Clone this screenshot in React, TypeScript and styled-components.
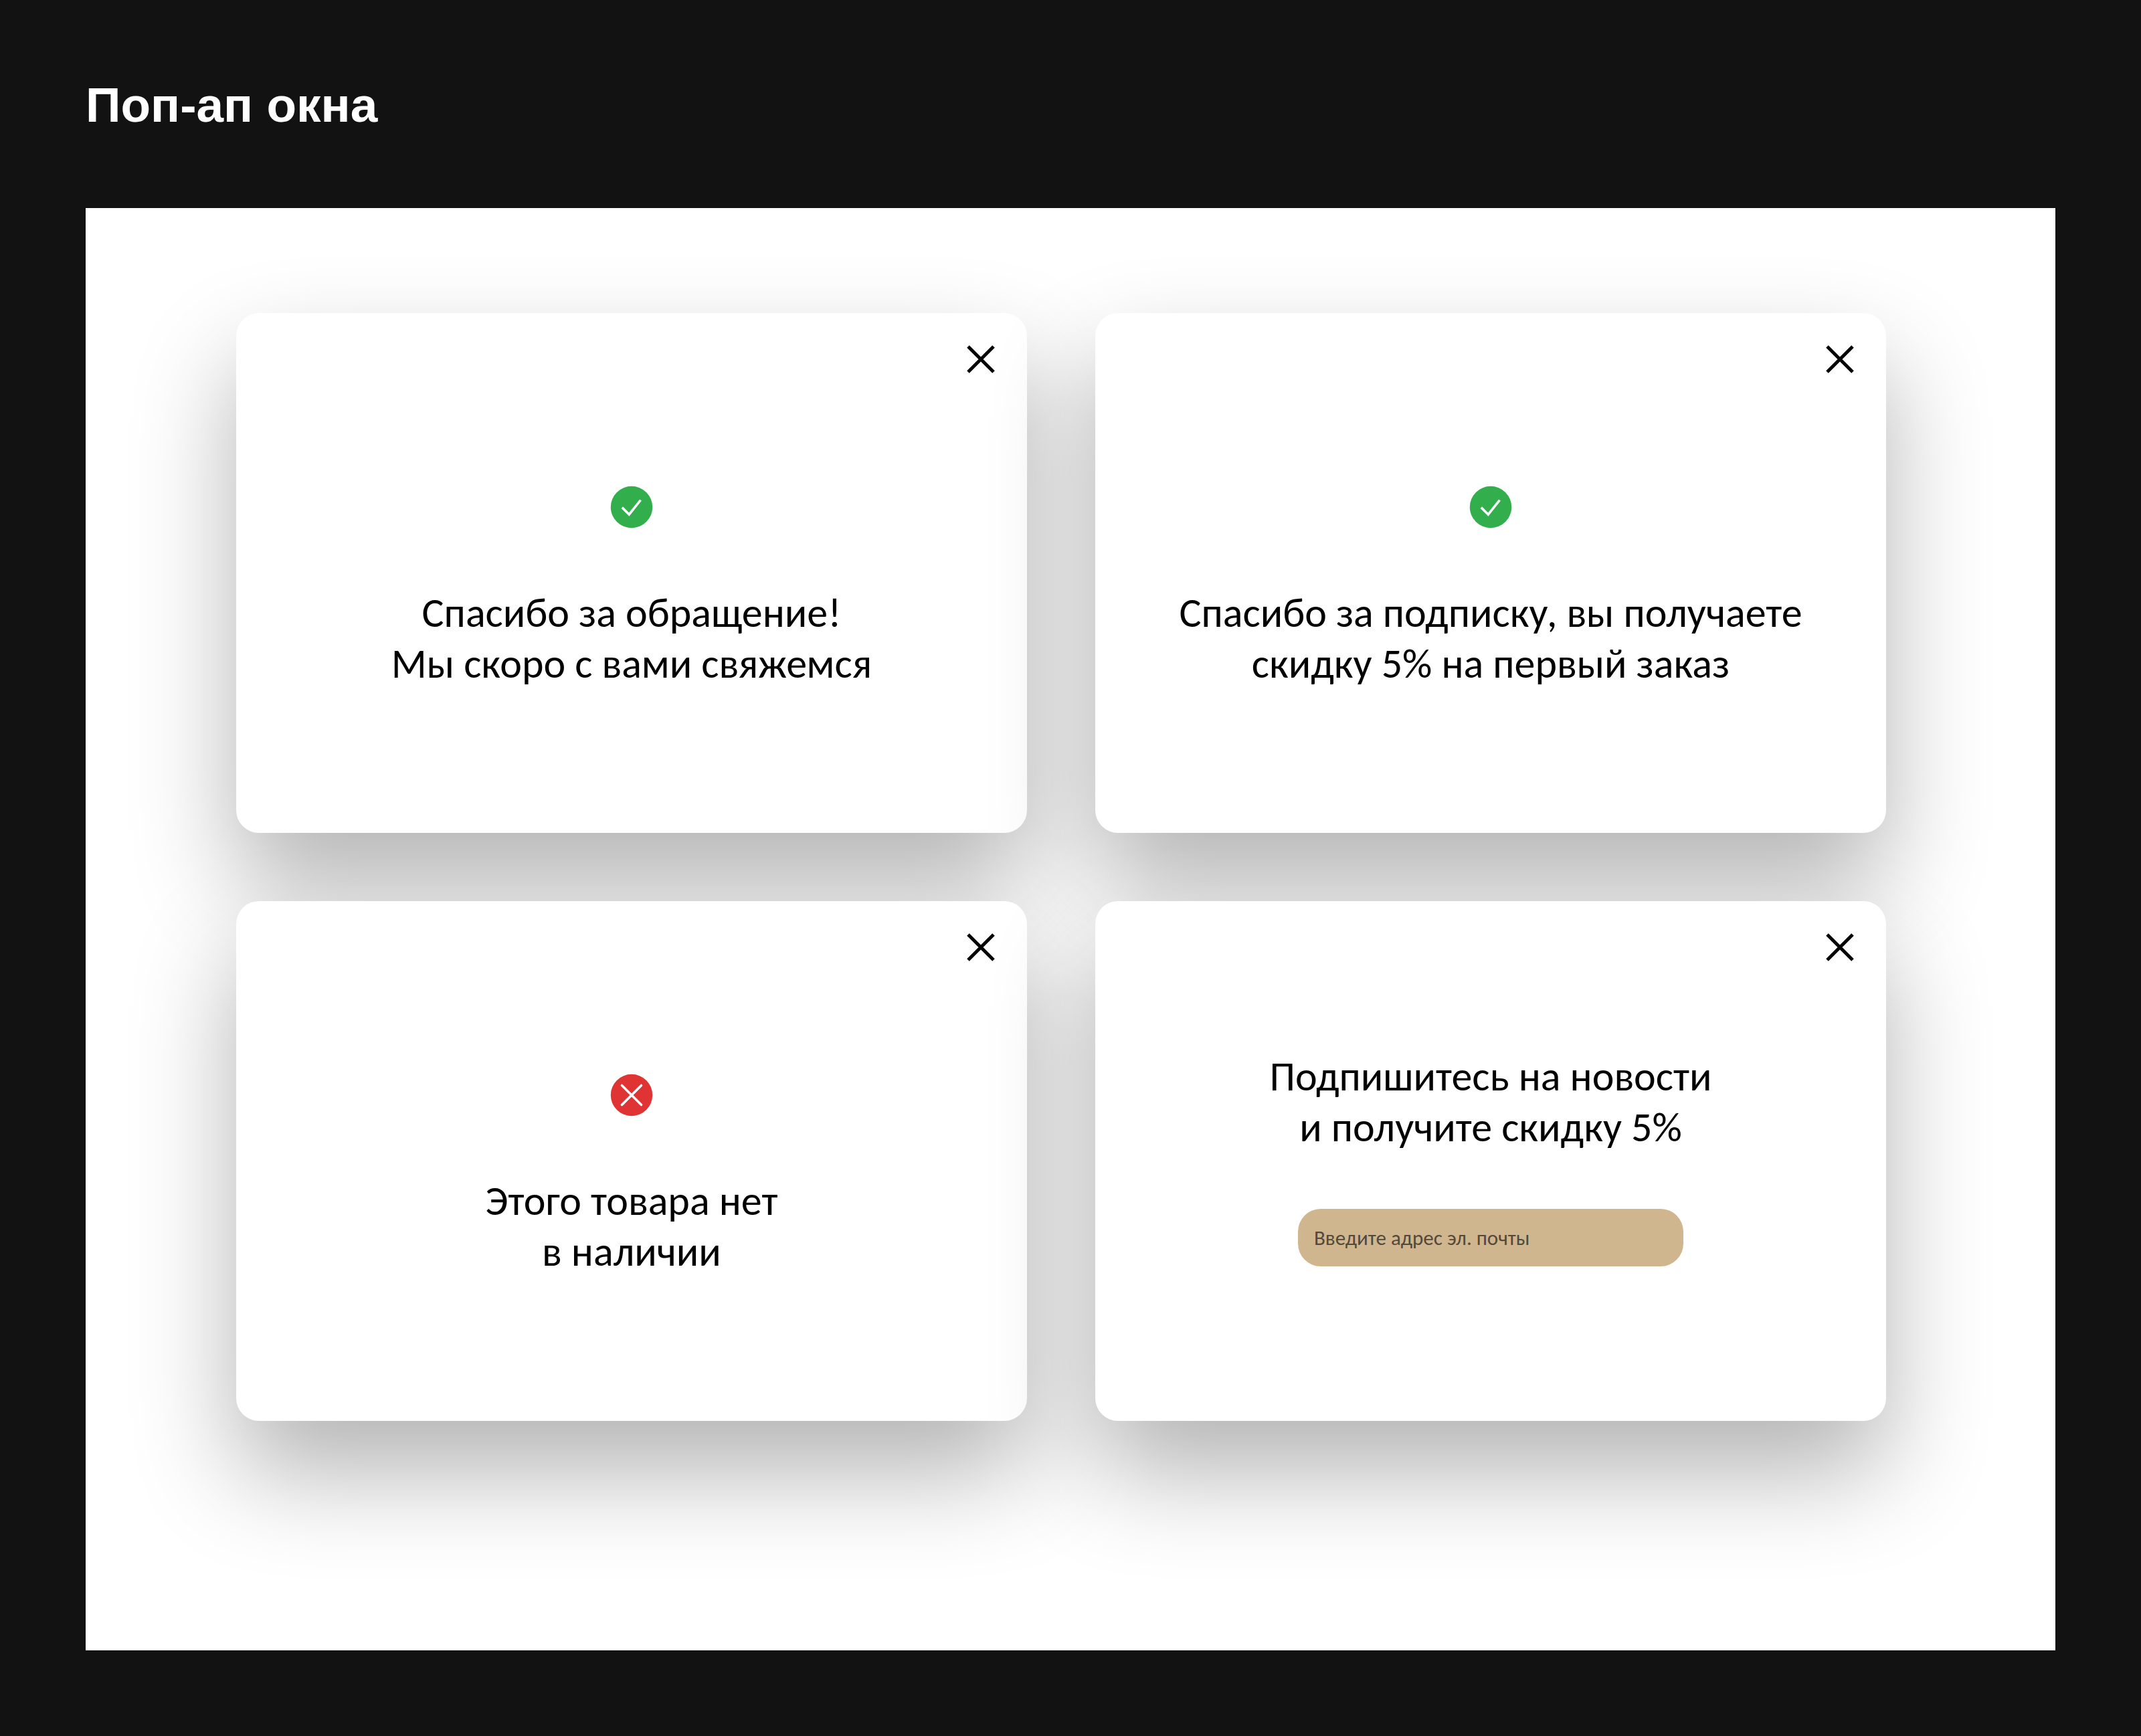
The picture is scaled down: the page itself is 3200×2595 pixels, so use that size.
import React from "react";
import styled, { createGlobalStyle } from "styled-components";

const GlobalStyle = createGlobalStyle`
  *, *::before, *::after {
    box-sizing: border-box;
  }

  body {
    margin: 0;
    background: #121212;
    font-family: Carlito, Calibri, Lato, sans-serif;
    color: #000;
  }
`;

const Page = styled.main`
  padding: 115px 128px 128px;
`;

const Title = styled.h1`
  margin: 0 0 112px;
  font-family: "Liberation Sans", Arial, sans-serif;
  font-size: 73px;
  font-weight: 700;
  line-height: 84px;
  color: #fff;
`;

const Board = styled.section`
  display: grid;
  grid-template-columns: repeat(2, minmax(0, 1fr));
  gap: 102px;
  padding: 157px 253px 343px 225px;
  background: #fff;
`;

const Popup = styled.article`
  display: flex;
  flex-direction: column;
  min-height: 777px;
  padding: 48px;
  border-radius: 34px;
  background: #fff;
  box-shadow: 0 76px 154px rgba(0, 0, 0, 0.3);
`;

const CloseButton = styled.button`
  display: block;
  align-self: flex-end;
  width: 42px;
  height: 42px;
  padding: 0;
  border: 0;
  background: none;
  color: #000;
  cursor: pointer;

  svg {
    display: block;
    width: 100%;
    height: 100%;
  }
`;

const Content = styled.div<{ $offset: number }>`
  display: flex;
  flex-direction: column;
  align-items: center;
  gap: 84px;
  padding-top: ${(p) => p.$offset}px;
`;

const StatusIcon = styled.svg`
  display: block;
  width: 64px;
  height: 64px;
  margin-bottom: 4px;
`;

const Message = styled.p`
  margin: 0;
  font-size: 62px;
  line-height: 76px;
  text-align: center;
`;

const EmailField = styled.input`
  width: 576px;
  max-width: 100%;
  height: 86px;
  padding: 0 24px;
  border: 0;
  border-radius: 34px;
  background: #d0b68f;
  font-family: inherit;
  font-size: 31px;
  color: #000;

  &::placeholder {
    color: #53493a;
    opacity: 1;
  }
`;

const CloseIcon = () => (
  <svg viewBox="0 0 42 42" fill="none" stroke="currentColor" strokeWidth="5" aria-hidden="true">
    <path d="M2 2L40 40M40 2L2 40" />
  </svg>
);

const SuccessIcon = () => (
  <StatusIcon viewBox="0 0 64 64" fill="none" aria-hidden="true">
    <circle cx="32" cy="32" r="31.2" fill="#32ae4d" />
    <path d="M17.8 32.6L28.3 43L45.5 21.5" stroke="#fff" strokeWidth="3.6" />
  </StatusIcon>
);

const ErrorIcon = () => (
  <StatusIcon viewBox="0 0 64 64" fill="none" aria-hidden="true">
    <circle cx="32" cy="32" r="31.2" fill="#e03434" />
    <path d="M17.5 17.5L46.5 46.5M46.5 17.5L17.5 46.5" stroke="#fff" strokeWidth="3.6" strokeLinecap="round" />
  </StatusIcon>
);

type CardProps = {
  lines: [string, string];
  icon?: React.ReactNode;
  offset?: number;
  children?: React.ReactNode;
};

const PopupCard = ({ lines, icon, offset = 168, children }: CardProps) => (
  <Popup>
    <CloseButton type="button" aria-label="Закрыть">
      <CloseIcon />
    </CloseButton>
    <Content $offset={offset}>
      {icon}
      <Message>
        {lines[0]}
        <br />
        {lines[1]}
      </Message>
      {children}
    </Content>
  </Popup>
);

export default function App() {
  return (
    <>
      <GlobalStyle />
      <Page>
        <Title>Поп-ап окна</Title>
        <Board>
          <PopupCard icon={<SuccessIcon />} lines={["Спасибо за обращение!", "Мы скоро с вами свяжемся"]} />
          <PopupCard
            icon={<SuccessIcon />}
            lines={["Спасибо за подписку, вы получаете", "скидку 5% на первый заказ"]}
          />
          <PopupCard icon={<ErrorIcon />} lines={["Этого товара нет", "в наличии"]} />
          <PopupCard offset={134} lines={["Подпишитесь на новости", "и получите скидку 5%"]}>
            <EmailField type="email" placeholder="Введите адрес эл. почты" aria-label="Адрес эл. почты" />
          </PopupCard>
        </Board>
      </Page>
    </>
  );
}
